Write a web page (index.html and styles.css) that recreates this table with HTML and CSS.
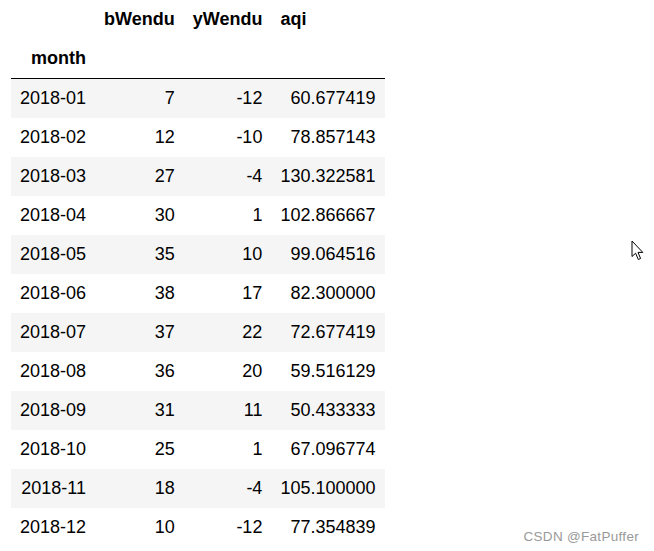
FILE: index.html
```html
<!DOCTYPE html>
<html>
<head>
<meta charset="utf-8">
<link rel="stylesheet" href="styles.css">
</head>
<body>
<table class="df">
  <thead>
    <tr><th class="blank"></th><th>bWendu</th><th>yWendu</th><th>aqi</th></tr>
    <tr><th class="idx">month</th><th></th><th></th><th></th></tr>
  </thead>
  <tbody>
    <tr><th>2018-01</th><td>7</td><td>-12</td><td>60.677419</td></tr>
    <tr><th>2018-02</th><td>12</td><td>-10</td><td>78.857143</td></tr>
    <tr><th>2018-03</th><td>27</td><td>-4</td><td>130.322581</td></tr>
    <tr><th>2018-04</th><td>30</td><td>1</td><td>102.866667</td></tr>
    <tr><th>2018-05</th><td>35</td><td>10</td><td>99.064516</td></tr>
    <tr><th>2018-06</th><td>38</td><td>17</td><td>82.300000</td></tr>
    <tr><th>2018-07</th><td>37</td><td>22</td><td>72.677419</td></tr>
    <tr><th>2018-08</th><td>36</td><td>20</td><td>59.516129</td></tr>
    <tr><th>2018-09</th><td>31</td><td>11</td><td>50.433333</td></tr>
    <tr><th>2018-10</th><td>25</td><td>1</td><td>67.096774</td></tr>
    <tr><th>2018-11</th><td>18</td><td>-4</td><td>105.100000</td></tr>
    <tr><th>2018-12</th><td>10</td><td>-12</td><td>77.354839</td></tr>
  </tbody>
</table>
<svg class="cursor" width="14" height="22" viewBox="0 0 14 22">
  <path d="M1 1 L1 16.5 L4.6 13.2 L7.3 19.5 L9.6 18.5 L7 12.4 L11.8 12.4 Z" fill="#fff" stroke="#000" stroke-width="1" stroke-linejoin="miter"/>
</svg>
<div class="watermark">CSDN @FatPuffer</div>
</body>
</html>
```
FILE: styles.css
```css
html, body {
  margin: 0;
  padding: 0;
  background: #fff;
}
body {
  width: 654px;
  height: 551px;
  position: relative;
  overflow: hidden;
  font-family: "Liberation Sans", Arial, sans-serif;
  color: #000;
}
.df {
  margin-left: 11px;
  border: none;
  border-collapse: collapse;
  border-spacing: 0;
  font-size: 18px;
}
.df th, .df td {
  padding: 9px 9px;
  line-height: normal;
  vertical-align: middle;
}
.df thead {
  border-bottom: 1.5px solid #000;
}
.df thead th {
  text-align: left;
  font-weight: bold;
}
.df thead th.idx {
  text-align: right;
}
.df tbody th {
  text-align: right;
  font-weight: normal;
}
.df tbody td {
  text-align: right;
}
.df tbody tr:nth-child(odd) {
  background: #f5f5f5;
}
.cursor {
  position: absolute;
  left: 631px;
  top: 240px;
}
.watermark {
  position: absolute;
  right: 15px;
  top: 529px;
  font-size: 13.5px;
  letter-spacing: 0.3px;
  color: #999;
  font-family: "Liberation Sans", Arial, sans-serif;
}
```
